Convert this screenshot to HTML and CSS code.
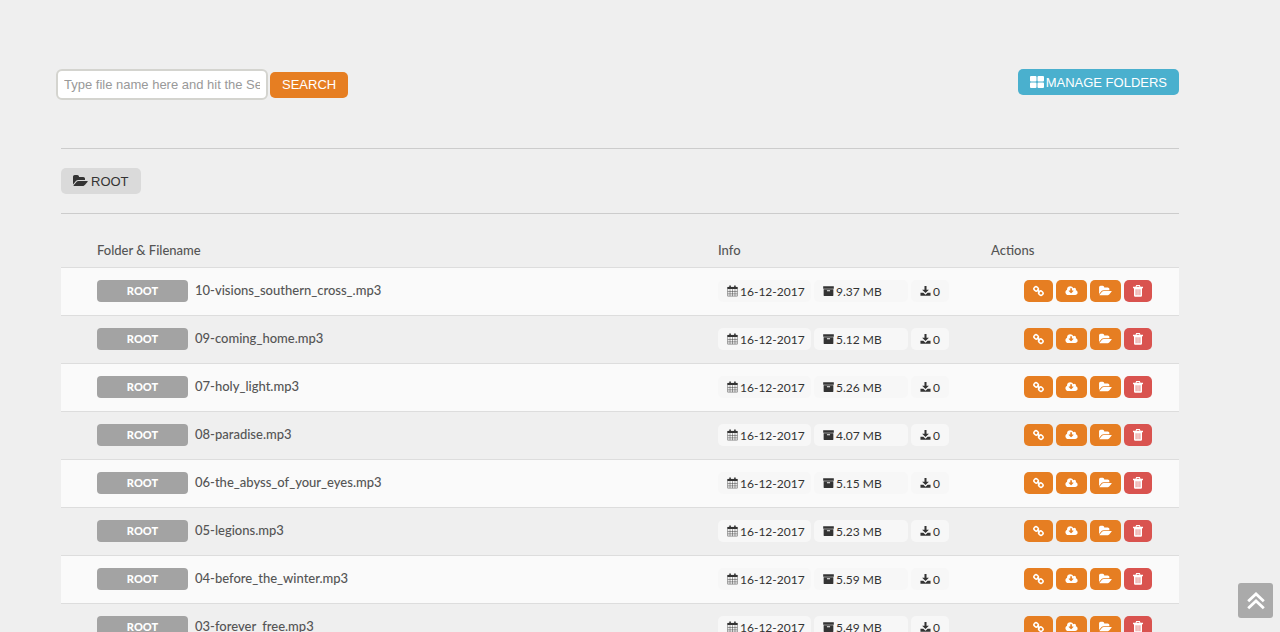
FILE: index.html
```html
<!DOCTYPE html>
<html lang="en">
<head>
    <meta charset="UTF-8">
    <meta name="viewport" content="width=device-width, initial-scale=1.0">
    <title>Files</title>
    <link rel="stylesheet" href="styles.css">
</head>
<body>
    <!-- Icons -->
    <svg class="sprite" aria-hidden="true">
        <symbol id="folder" viewBox="0 0 1920 1792">
            <path d="M1879 952q0 31-31 66l-336 396q-43 51-120.5 86.5t-143.5 35.5h-1088q-34 0-60.5-13t-26.5-43q0-31 31-66l336-396q43-51 120.5-86.5t143.5-35.5h1088q34 0 60.5 13t26.5 43zm-343-344v160h-832q-94 0-197 47.5t-164 119.5l-337 396-5 6q0-4-.5-12.5t-.5-12.5v-960q0-92 66-158t158-66h320q92 0 158 66t66 158v32h544q92 0 158 66t66 158z"/>
        </symbol>
        <symbol id="cloud" viewBox="0 0 2048 1792">
            <path d="M1344 864q0-14-9-23t-23-9h-224v-352q0-13-9.5-22.5t-22.5-9.5h-192q-13 0-22.5 9.5t-9.5 22.5v352h-224q-13 0-22.5 9.5t-9.5 22.5q0 14 9 23l352 352q9 9 23 9t23-9l351-351q10-12 10-24zm640 288q0 159-112.5 271.5t-271.5 112.5h-1088q-185 0-316.5-131.5t-131.5-316.5q0-130 70-240t188-165q-2-30-2-43 0-212 150-362t362-150q156 0 285.5 87t188.5 231q71-62 166-62 106 0 181 75t75 181q0 76-41 138 130 31 213.5 135.5t83.5 238.5z"/>
        </symbol>
        <symbol id="trash" viewBox="0 0 10 12">
            <path fill-rule="evenodd" d="M3.200 0h3.600l.7 1.800H10v1.400H9v7.300q0 1.300-1.200 1.300H2.200Q1 11.800 1 10.500V3.200H0V1.800h2.500zM3.900.9l-.4.9h3l-.4-.9zM2.700 4.300v5.900h.7V4.300zM4.650 4.300v5.900h.7V4.300zM6.600 4.300v5.900h.7V4.300z"/>
        </symbol>
        <symbol id="link" viewBox="0 0 14 14">
            <g fill="none" stroke="currentColor" stroke-width="2">
                <rect x="1.2" y="1.800" width="5.600" height="5" rx="2.300" transform="rotate(45 4 4.300)"/>
                <rect x="7.200" y="7.200" width="5.600" height="5" rx="2.300" transform="rotate(45 10 9.700)"/>
                <path d="M5.200 5.200l3.600 3.600"/>
            </g>
        </symbol>
        <symbol id="grid" viewBox="0 0 14 12">
            <path d="M1 0h4.500a1 1 0 0 1 1 1v3.500a1 1 0 0 1-1 1H1a1 1 0 0 1-1-1V1a1 1 0 0 1 1-1zM8.500 0H13a1 1 0 0 1 1 1v3.500a1 1 0 0 1-1 1H8.500a1 1 0 0 1-1-1V1a1 1 0 0 1 1-1zM1 6.500h4.500a1 1 0 0 1 1 1V11a1 1 0 0 1-1 1H1a1 1 0 0 1-1-1V7.500a1 1 0 0 1 1-1zM8.500 6.500H13a1 1 0 0 1 1 1V11a1 1 0 0 1-1 1H8.500a1 1 0 0 1-1-1V7.500a1 1 0 0 1 1-1z"/>
        </symbol>
        <symbol id="calendar" viewBox="0 0 12 12">
            <path fill="none" stroke="currentColor" stroke-width=".5" d="M.7 2h10.600v9.600H.7zM.7 6.600h10.600M.7 9.100h10.600M3.300 4v7.600M6 4v7.600M8.700 4v7.600"/>
            <path d="M.5 1.600h11v2.300H.5zM2.500.1h1.700v2.600H2.500zM7.800.1h1.700v2.600H7.800z"/>
        </symbol>
        <symbol id="archive" viewBox="0 0 12 12">
            <path fill-rule="evenodd" d="M.2.800h11.600v2.700H.2zM.7 4.200h10.600v6.700q0 .5-.5.5H1.200q-.5 0-.5-.5zM4.300 5.200v1.200h3.400V5.200z"/>
        </symbol>
        <symbol id="download" viewBox="0 0 12 12">
            <path d="M4.900.5h2.200v4h2.600L6 8.200 2.300 4.500h2.600zM.5 8h3.200L6 10l2.300-2h3.200v3.200H.5z"/>
        </symbol>
        <symbol id="up" viewBox="0 0 18 18">
            <path fill="none" stroke="currentColor" stroke-width="2.800" d="M1.200 9.200L9 1.900l7.800 7.300M1.200 16.200L9 8.900l7.800 7.300"/>
        </symbol>
    </svg>

    <div class="container">
        <div class="toolbar">
            <form class="search-form">
                <input type="text" class="search-input" aria-label="File name" placeholder="Type file name here and hit the Search button">
                <button type="button" class="btn btn-orange">SEARCH</button>
            </form>
            <button type="button" class="btn btn-blue"><svg class="icon-grid"><use href="#grid"/></svg>MANAGE FOLDERS</button>
        </div>

        <nav class="breadcrumb">
            <a href="#" class="btn btn-grey"><svg class="icon-root"><use href="#folder"/></svg>ROOT</a>
        </nav>

        <table class="files">
            <thead>
                <tr>
                    <th class="col-name">Folder &amp; Filename</th>
                    <th class="col-info">Info</th>
                    <th class="col-actions">Actions</th>
                </tr>
            </thead>
            <tbody>
                <tr>
                    <td><div class="file"><a href="#" class="folder">ROOT</a><span class="name">10-visions_southern_cross_.mp3</span></div></td>
                    <td><div class="info"><span class="pill date"><svg><use href="#calendar"/></svg>16-12-2017</span><span class="pill size"><svg><use href="#archive"/></svg>9.37 MB</span><span class="pill"><svg><use href="#download"/></svg>0</span></div></td>
                    <td><div class="actions">
                        <button type="button" aria-label="Link"><svg><use href="#link"/></svg></button>
                        <button type="button" aria-label="Download"><svg class="wide"><use href="#cloud"/></svg></button>
                        <button type="button" aria-label="Move"><svg class="wide"><use href="#folder"/></svg></button>
                        <button type="button" aria-label="Delete" class="delete"><svg><use href="#trash"/></svg></button>
                    </div></td>
                </tr>
                <tr>
                    <td><div class="file"><a href="#" class="folder">ROOT</a><span class="name">09-coming_home.mp3</span></div></td>
                    <td><div class="info"><span class="pill date"><svg><use href="#calendar"/></svg>16-12-2017</span><span class="pill size"><svg><use href="#archive"/></svg>5.12 MB</span><span class="pill"><svg><use href="#download"/></svg>0</span></div></td>
                    <td><div class="actions">
                        <button type="button" aria-label="Link"><svg><use href="#link"/></svg></button>
                        <button type="button" aria-label="Download"><svg class="wide"><use href="#cloud"/></svg></button>
                        <button type="button" aria-label="Move"><svg class="wide"><use href="#folder"/></svg></button>
                        <button type="button" aria-label="Delete" class="delete"><svg><use href="#trash"/></svg></button>
                    </div></td>
                </tr>
                <tr>
                    <td><div class="file"><a href="#" class="folder">ROOT</a><span class="name">07-holy_light.mp3</span></div></td>
                    <td><div class="info"><span class="pill date"><svg><use href="#calendar"/></svg>16-12-2017</span><span class="pill size"><svg><use href="#archive"/></svg>5.26 MB</span><span class="pill"><svg><use href="#download"/></svg>0</span></div></td>
                    <td><div class="actions">
                        <button type="button" aria-label="Link"><svg><use href="#link"/></svg></button>
                        <button type="button" aria-label="Download"><svg class="wide"><use href="#cloud"/></svg></button>
                        <button type="button" aria-label="Move"><svg class="wide"><use href="#folder"/></svg></button>
                        <button type="button" aria-label="Delete" class="delete"><svg><use href="#trash"/></svg></button>
                    </div></td>
                </tr>
                <tr>
                    <td><div class="file"><a href="#" class="folder">ROOT</a><span class="name">08-paradise.mp3</span></div></td>
                    <td><div class="info"><span class="pill date"><svg><use href="#calendar"/></svg>16-12-2017</span><span class="pill size"><svg><use href="#archive"/></svg>4.07 MB</span><span class="pill"><svg><use href="#download"/></svg>0</span></div></td>
                    <td><div class="actions">
                        <button type="button" aria-label="Link"><svg><use href="#link"/></svg></button>
                        <button type="button" aria-label="Download"><svg class="wide"><use href="#cloud"/></svg></button>
                        <button type="button" aria-label="Move"><svg class="wide"><use href="#folder"/></svg></button>
                        <button type="button" aria-label="Delete" class="delete"><svg><use href="#trash"/></svg></button>
                    </div></td>
                </tr>
                <tr>
                    <td><div class="file"><a href="#" class="folder">ROOT</a><span class="name">06-the_abyss_of_your_eyes.mp3</span></div></td>
                    <td><div class="info"><span class="pill date"><svg><use href="#calendar"/></svg>16-12-2017</span><span class="pill size"><svg><use href="#archive"/></svg>5.15 MB</span><span class="pill"><svg><use href="#download"/></svg>0</span></div></td>
                    <td><div class="actions">
                        <button type="button" aria-label="Link"><svg><use href="#link"/></svg></button>
                        <button type="button" aria-label="Download"><svg class="wide"><use href="#cloud"/></svg></button>
                        <button type="button" aria-label="Move"><svg class="wide"><use href="#folder"/></svg></button>
                        <button type="button" aria-label="Delete" class="delete"><svg><use href="#trash"/></svg></button>
                    </div></td>
                </tr>
                <tr>
                    <td><div class="file"><a href="#" class="folder">ROOT</a><span class="name">05-legions.mp3</span></div></td>
                    <td><div class="info"><span class="pill date"><svg><use href="#calendar"/></svg>16-12-2017</span><span class="pill size"><svg><use href="#archive"/></svg>5.23 MB</span><span class="pill"><svg><use href="#download"/></svg>0</span></div></td>
                    <td><div class="actions">
                        <button type="button" aria-label="Link"><svg><use href="#link"/></svg></button>
                        <button type="button" aria-label="Download"><svg class="wide"><use href="#cloud"/></svg></button>
                        <button type="button" aria-label="Move"><svg class="wide"><use href="#folder"/></svg></button>
                        <button type="button" aria-label="Delete" class="delete"><svg><use href="#trash"/></svg></button>
                    </div></td>
                </tr>
                <tr>
                    <td><div class="file"><a href="#" class="folder">ROOT</a><span class="name">04-before_the_winter.mp3</span></div></td>
                    <td><div class="info"><span class="pill date"><svg><use href="#calendar"/></svg>16-12-2017</span><span class="pill size"><svg><use href="#archive"/></svg>5.59 MB</span><span class="pill"><svg><use href="#download"/></svg>0</span></div></td>
                    <td><div class="actions">
                        <button type="button" aria-label="Link"><svg><use href="#link"/></svg></button>
                        <button type="button" aria-label="Download"><svg class="wide"><use href="#cloud"/></svg></button>
                        <button type="button" aria-label="Move"><svg class="wide"><use href="#folder"/></svg></button>
                        <button type="button" aria-label="Delete" class="delete"><svg><use href="#trash"/></svg></button>
                    </div></td>
                </tr>
                <tr>
                    <td><div class="file"><a href="#" class="folder">ROOT</a><span class="name">03-forever_free.mp3</span></div></td>
                    <td><div class="info"><span class="pill date"><svg><use href="#calendar"/></svg>16-12-2017</span><span class="pill size"><svg><use href="#archive"/></svg>5.49 MB</span><span class="pill"><svg><use href="#download"/></svg>0</span></div></td>
                    <td><div class="actions">
                        <button type="button" aria-label="Link"><svg><use href="#link"/></svg></button>
                        <button type="button" aria-label="Download"><svg class="wide"><use href="#cloud"/></svg></button>
                        <button type="button" aria-label="Move"><svg class="wide"><use href="#folder"/></svg></button>
                        <button type="button" aria-label="Delete" class="delete"><svg><use href="#trash"/></svg></button>
                    </div></td>
                </tr>
            </tbody>
        </table>
    </div>

    <a href="#" class="to-top" aria-label="Back to top"><svg><use href="#up"/></svg></a>
</body>
</html>
```
FILE: styles.css
```css
* {
    margin: 0;
    padding: 0;
    box-sizing: border-box;
}

body {
    background-color: #efefef;
    color: #555;
    font-family: Lato, sans-serif;
    font-size: 13px;
}

svg {
    fill: currentColor;
    flex: none;
}

.sprite {
    display: none;
}

.container {
    padding: 69px 101px 0 61px;
}

.toolbar {
    display: flex;
    justify-content: space-between;
    align-items: flex-start;
    height: 80px;
    border-bottom: 1px solid #ccc;
}

.search-form {
    display: flex;
    align-items: center;
    gap: 2px;
    margin-left: -5px;
}

.search-input {
    width: 212px;
    height: 31px;
    padding: 0 6px;
    border: 2px solid #d4d4cf;
    border-radius: 6px;
    background: #fff;
    color: #555;
    font-family: "Liberation Sans", Arial, sans-serif;
    font-size: 13px;
}

.search-input::placeholder {
    color: #999;
}

.btn {
    display: inline-flex;
    align-items: center;
    height: 26px;
    padding: 0 12px;
    border: none;
    border-radius: 5px;
    color: #fff;
    font-family: "Liberation Sans", Arial, sans-serif;
    font-size: 13px;
    text-decoration: none;
    cursor: pointer;
}

.btn-orange {
    background: #e67e22;
}

.btn-blue {
    background: #4ab0ce;
}

.btn-grey {
    background: #dadada;
    color: #333;
}

.icon-grid {
    width: 14px;
    height: 12px;
    margin-right: 2px;
}

.icon-root {
    width: 15px;
    height: 14px;
    margin-right: 3px;
}

.breadcrumb {
    display: flex;
    padding: 19px 0;
    border-bottom: 1px solid #ccc;
}

.files {
    width: 100%;
    margin-top: 20px;
    border-collapse: collapse;
}

.files th {
    height: 33px;
    padding: 0 8px;
    font-weight: 500;
    text-align: left;
}

.files .col-name {
    padding-left: 36px;
}

.col-info {
    width: 273px;
}

.col-actions {
    width: 196px;
}

.files td {
    height: 48px;
    padding: 0 8px;
    border-top: 1px solid #ddd;
}

.files td:first-child {
    padding-left: 36px;
}

.files tbody tr:nth-child(odd) {
    background: #fafafa;
}

.file {
    display: flex;
    align-items: center;
    gap: 7px;
}

.folder {
    width: 91px;
    border-radius: 4px;
    background: #a3a3a3;
    color: #fff;
    font-size: 11px;
    font-weight: 900;
    line-height: 22px;
    text-align: center;
    text-decoration: none;
}

.name {
    padding-bottom: 2px;
    font-weight: 500;
}

.info {
    display: flex;
    gap: 3px;
}

.pill {
    display: flex;
    align-items: center;
    gap: 2px;
    height: 22px;
    padding: 0 9px;
    border-radius: 5px;
    background: #f7f7f7;
    color: #333;
    font-size: 12px;
    white-space: nowrap;
}

.pill svg {
    width: 11px;
    height: 12px;
}

.date {
    width: 93px;
}

.size {
    width: 94px;
}

.actions {
    display: flex;
    gap: 3px;
    padding-left: 33px;
}

.actions button {
    display: flex;
    align-items: center;
    justify-content: center;
    height: 22px;
    padding: 0 9px;
    border: none;
    border-radius: 5px;
    background: #e67e22;
    color: #fff;
    cursor: pointer;
}

.actions .delete {
    background: #d9534f;
}

.actions svg {
    width: 11px;
    height: 12px;
}

.actions .wide {
    width: 13px;
}

.actions .delete svg {
    width: 10px;
}

/* Fixed over the list */
.to-top {
    position: fixed;
    right: 7px;
    bottom: 14px;
    display: flex;
    align-items: center;
    justify-content: center;
    width: 35px;
    height: 35px;
    border-radius: 3px;
    background: #aaa;
    color: #fff;
}

.to-top svg {
    width: 18px;
    height: 18px;
}
```
